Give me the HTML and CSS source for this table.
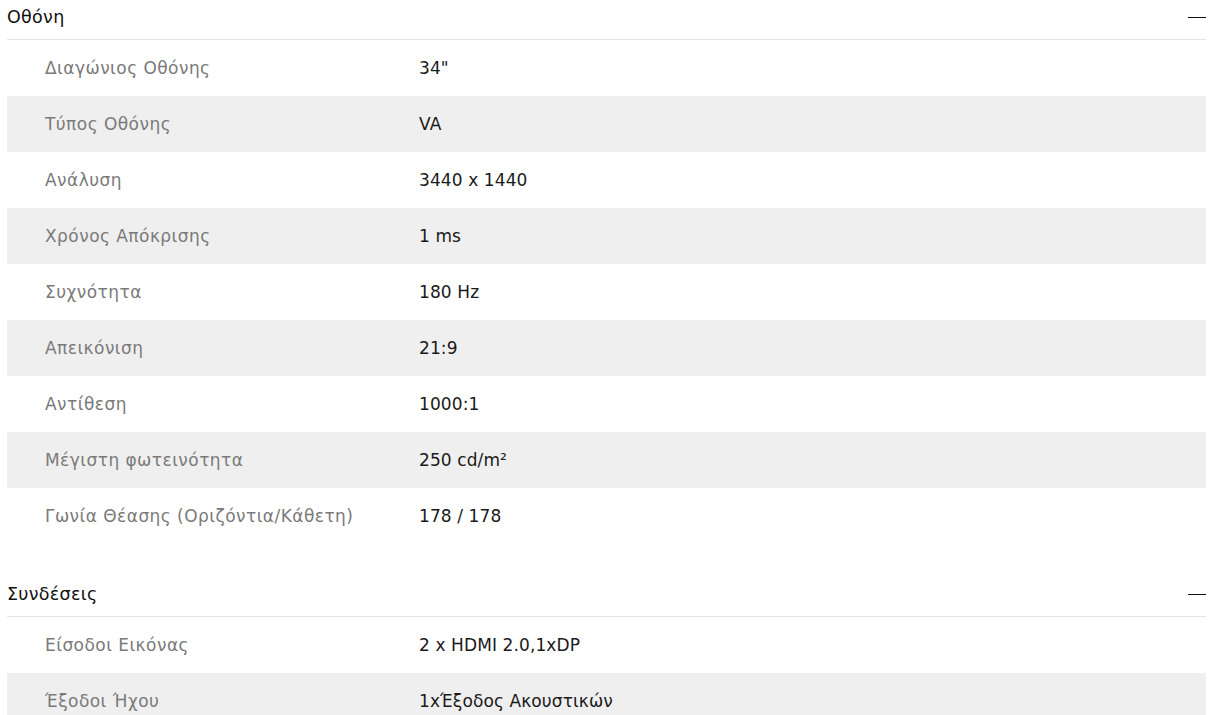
FILE: index.html
```html
<!DOCTYPE html>
<html lang="el">
<head>
<meta charset="utf-8">
<link rel="stylesheet" href="styles.css">
</head>
<body>
<div class="specs">
  <section class="group">
    <div class="group-head"><span class="group-title">Οθόνη</span><span class="dash"></span></div>
    <div class="row"><span class="label">Διαγώνιος Οθόνης</span><span class="value">34"</span></div>
    <div class="row"><span class="label">Τύπος Οθόνης</span><span class="value">VA</span></div>
    <div class="row"><span class="label">Ανάλυση</span><span class="value">3440 x 1440</span></div>
    <div class="row"><span class="label">Χρόνος Απόκρισης</span><span class="value">1 ms</span></div>
    <div class="row"><span class="label">Συχνότητα</span><span class="value">180 Hz</span></div>
    <div class="row"><span class="label">Απεικόνιση</span><span class="value">21:9</span></div>
    <div class="row"><span class="label">Αντίθεση</span><span class="value">1000:1</span></div>
    <div class="row"><span class="label">Μέγιστη φωτεινότητα</span><span class="value">250 cd/m²</span></div>
    <div class="row"><span class="label">Γωνία Θέασης (Οριζόντια/Κάθετη)</span><span class="value">178 / 178</span></div>
  </section>
  <section class="group">
    <div class="group-head"><span class="group-title">Συνδέσεις</span><span class="dash"></span></div>
    <div class="row"><span class="label">Είσοδοι Εικόνας</span><span class="value">2 x HDMI 2.0,1xDP</span></div>
    <div class="row"><span class="label">Έξοδοι Ήχου</span><span class="value">1xΈξοδος Ακουστικών</span></div>
  </section>
</div>
</body>
</html>
```
FILE: styles.css
```css
html, body {
  margin: 0;
  padding: 0;
  background: #fff;
}
body {
  font-family: "DejaVu Sans", sans-serif;
  font-size: 17px;
  color: #1a1a1a;
}
.specs {
  padding: 0 2px 0 7px;
  display: flex;
  flex-direction: column;
  gap: 33px;
}
.group-head {
  border-bottom: 1px solid #e6e6e6;
  display: flex;
  align-items: center;
  justify-content: space-between;
  padding: 0 0 6px 0;
  height: 33px;
}
.group-title {
  font-size: 17.5px;
  letter-spacing: 0.3px;
  color: #111;
}
.dash {
  width: 18px;
  height: 1.5px;
  margin-top: 2px;
  background: #111;
}
.row {
  height: 56px;
  display: grid;
  grid-template-columns: 374px 1fr;
  align-items: center;
  padding-left: 38px;
}
.row:nth-of-type(odd) {
  background: #efefef;
}
.group-head + .row {
  background: transparent;
}
.label {
  color: #7a7a7a;
  letter-spacing: 0.45px;
}
.value {
  color: #1a1a1a;
  letter-spacing: 0.1px;
}
```
